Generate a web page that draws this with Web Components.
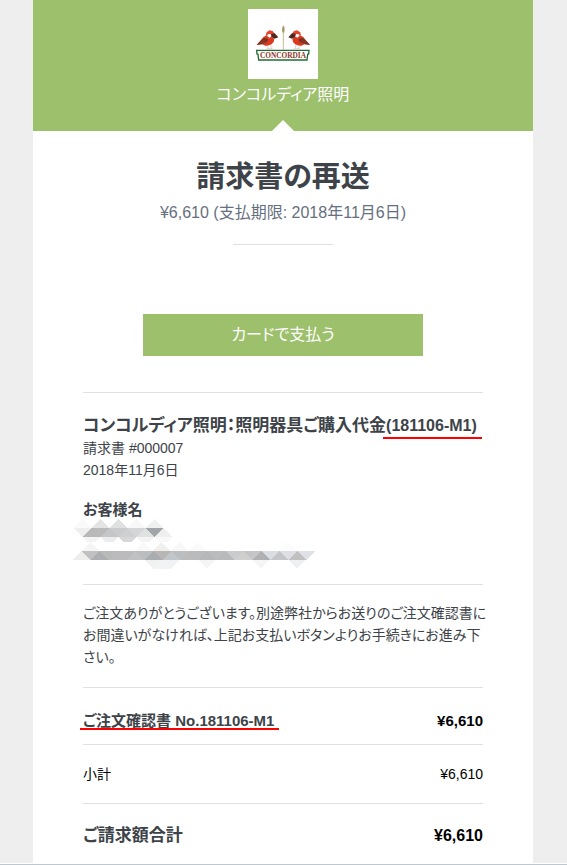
<!DOCTYPE html>
<html lang="ja">
<head>
<meta charset="utf-8">
<meta name="viewport" content="width=device-width, initial-scale=1">
<title>請求書の再送</title>
<style>
    body {
        --brand-color: #9dc06d;
        --rule-color: #dfe0e1;
        --mark-color: #ff0000;
        margin: 0;
        background-color: #eeeeee;
        color: #3d4348;
        font-family: "Liberation Sans", "Noto Sans CJK JP", sans-serif;
        font-size: 14px;
        line-height: 22px;
        /* proportional kana */
        font-feature-settings: "palt";
    }
</style>
</head>
<body>

<invoice-mail>
    <invoice-header slot="header">コンコルディア照明</invoice-header>
    <invoice-summary>
        請求書の再送
        <span slot="due">¥6,610 (支払期限: 2018年11月6日)</span>
    </invoice-summary>
    <pay-button>カードで支払う</pay-button>
    <invoice-details number="請求書 #000007" date="2018年11月6日" customer="お客様名">
        コンコルディア照明：照明器具ご購入代金<marked-text>(181106-M1)</marked-text>
    </invoice-details>
    <invoice-note>ご注文ありがとうございます。別途弊社からお送りのご注文確認書にお間違いがなければ、上記お支払いボタンよりお手続きにお進み下さい。</invoice-note>
    <invoice-row kind="item" amount="¥6,610"><marked-text>ご注文確認書 No.181106-M1</marked-text></invoice-row>
    <invoice-row kind="subtotal" amount="¥6,610">小計</invoice-row>
    <invoice-row kind="total" amount="¥6,610">ご請求額合計</invoice-row>
</invoice-mail>

<script>

function makeTemplate(markup) {
    const template = document.createElement("template");
    template.innerHTML = markup;
    return template;
}

class TemplateElement extends HTMLElement {
    constructor() {
        super();
        this.attachShadow({mode: "open"});
        this.shadowRoot.appendChild(this.constructor.template.content.cloneNode(true));
    }
}


class InvoiceMail extends TemplateElement {
    static template = makeTemplate(`
<style>
    :host {
        display: block;
    }
    .sheet {
        max-width: 500px;
        margin: 0 auto;
        background-color: white;
    }
    .frame {
        padding-right: 1px;
    }
    main {
        padding: 26px 50px 0;
    }
    .edge {
        height: 1px;
        background-color: white;
        border-bottom: 1px solid #bfc8cf;
    }
</style>
<div class="frame">
    <div class="sheet">
        <slot name="header"></slot>
        <main><slot></slot></main>
    </div>
</div>
<div class="edge"></div>
`);
}


class ConcordiaLogo extends TemplateElement {
    static template = makeTemplate(`
<style>
    :host {
        display: block;
        width: 70px;
        height: 70px;
        background-color: white;
    }
    svg {
        display: block;
        width: 100%;
        height: 100%;
    }
    text {
        font-family: "Liberation Serif", serif;
        font-size: 22px;
        font-weight: bold;
        fill: #8c3326;
    }
</style>
<svg viewBox="0 0 210 210" role="img" aria-label="Concordia">
    <defs>
        <g id="bird">
            <path d="M26 108 L36 97 L46 84 L56 79 L72 84 L79 90 L77 99 L69 107 L54 111 L42 106 Z" fill="#dc3a20"/>
            <path d="M26 108 L40 93 L50 86 L60 91 L57 100 L42 105 Z" fill="#74301f"/>
            <path d="M36 102 L52 92 M40 105 L56 97" stroke="#a8472f" stroke-width="2"/>
            <path d="M53 79 L56 70 L64 64 L74 66 L80 74 L78 84 L68 86 Z" fill="#e2442c"/>
            <path d="M57 80 L61 75 L69 76 L71 82 L64 86 Z" fill="#ffffff"/>
            <path d="M69 75 L80 73 L91 85 L80 89 L71 84 Z" fill="#4c2820"/>
            <path d="M57 109 L61 119 M67 106 L71 119 M56 119 H74" fill="none" stroke="#d9bdb5" stroke-width="2"/>
        </g>
    </defs>
    <use href="#bird"/>
    <use href="#bird" transform="translate(212 0) scale(-1 1)"/>
    <path d="M106 68 V122" stroke="#a8a06f" stroke-width="2"/>
    <path d="M106 48 Q112 55 110 67 L107 75 L102 67 Q101 56 106 48 Z" fill="#b9ac7b"/>
    <path d="M104 55 l4 4 M103 62 l5 4" stroke="#7d7246" stroke-width="2"/>
    <path d="M105 79 l3 5 M105 88 l3 5 M105 98 l3 5" stroke="#d2c69b" stroke-width="3"/>
    <path d="M26 124 H183 L182 135 L179 136 L177 153 H32 L30 136 L27 135 Z" fill="#ffffff" stroke="#236b35" stroke-width="4"/>
    <text x="105" y="146" text-anchor="middle">CONCORDIA</text>
</svg>
`);
}


class InvoiceHeader extends TemplateElement {
    static template = makeTemplate(`
<style>
    :host {
        display: flex;
        flex-direction: column;
        align-items: center;
        position: relative;
        padding: 9px 0 20px;
        background-color: var(--brand-color);
        color: white;
        font-size: 16px;
        line-height: 32px;
    }
    /* notch that points up from the sheet */
    .notch {
        position: absolute;
        bottom: 0;
        left: calc(50% - 11px);
        border: solid transparent;
        border-width: 0 11px 11px;
        border-bottom-color: white;
    }
</style>
<concordia-logo></concordia-logo>
<div><slot></slot></div>
<div class="notch"></div>
`);
}


class InvoiceSummary extends TemplateElement {
    static template = makeTemplate(`
<style>
    :host {
        display: block;
        text-align: center;
    }
    h1 {
        margin: 0 0 4px;
        font-size: 29px;
        line-height: 40px;
    }
    p {
        margin: 0;
        color: #666f80;
        font-size: 16px;
        line-height: 24px;
    }
    hr {
        width: 100px;
        margin: 19px auto 0;
        border: 0;
        border-top: 1px solid var(--rule-color);
    }
</style>
<h1><slot></slot></h1>
<p><slot name="due"></slot></p>
<hr>
`);
}


class PayButton extends TemplateElement {
    static template = makeTemplate(`
<style>
    :host {
        display: flex;
        justify-content: center;
        padding: 69px 0 36px;
    }
    button {
        flex: 0 1 280px;
        padding: 9px;
        border: 0;
        background-color: var(--brand-color);
        color: white;
        font: inherit;
        font-feature-settings: inherit;
        font-size: 16px;
        line-height: 24px;
        cursor: pointer;
    }
</style>
<button type="button"><slot></slot></button>
`);
}


class MarkedText extends TemplateElement {
    static template = makeTemplate(`
<style>
    :host {
        display: inline-block;
        position: relative;
    }
    /* hand drawn underline, a little wider than the text */
    :host::after {
        content: "";
        position: absolute;
        left: -3px;
        right: -5px;
        bottom: var(--mark-bottom, 0);
        height: 2px;
        background-color: var(--mark-color);
    }
</style>
<slot></slot>
`);
}


// [direction, centre x, colour] for each row of the mosaic
const mosaicRows = [
    {top: 343, height: 26, cells: [
        ["up", 68, "#fafafa"], ["up", 122, "#e4e4e4"], ["up", 176, "#dee1e0"],
        ["up", 230, "#f7f7f7"], ["up", 284, "#eff1f1"],
    ]},
    {top: 369, height: 27, cells: [
        ["down", 68, "#efefef"], ["up", 95, "#b9b9ba"], ["down", 122, "#bababb"],
        ["up", 149, "#c5c6c7"], ["down", 176, "#cacbcd"], ["up", 203, "#cfd0d2"],
        ["down", 230, "#d5d6d8"], ["up", 257, "#e0e1e1"], ["down", 284, "#a1a5a8"],
        ["up", 311, "#efefef"],
    ]},
    {top: 396, height: 14, cells: [
        ["down", 95, "#f4f4f4"], ["down", 149, "#ededee"], ["down", 203, "#d5d7d9"],
        ["down", 257, "#f3f3f3"], ["down", 311, "#f8f8f8"],
    ]},
    {top: 411, height: 27, cells: [
        ["up", 90, "#f5f5f5"], ["up", 251, "#f9f9f9"], ["up", 305, "#f0f0ef"],
        ["up", 359, "#f8f8f8"], ["up", 412, "#fafafa"], ["up", 683, "#fcfcfc"],
    ]},
    {top: 438, height: 27, cells: [
        ["up", 63, "#ededec"], ["down", 90, "#c1c1c1"], ["up", 117, "#adaeb1"],
        ["down", 144, "#b9b9ba"], ["up", 171, "#bbbbbd"], ["down", 198, "#bbbbbb"],
        ["up", 225, "#c0c1c3"], ["down", 252, "#bbbcbe"], ["up", 279, "#a9acb0"],
        ["down", 306, "#b8b5b3"], ["up", 333, "#c1c6ca"], ["down", 360, "#bcbdbe"],
        ["up", 387, "#bbbbbb"], ["down", 414, "#b9babb"], ["up", 441, "#b6b7b9"],
        ["down", 468, "#bcbcbd"], ["up", 495, "#b8b9ba"], ["down", 522, "#c9cbcd"],
        ["up", 549, "#cfcfce"], ["down", 576, "#c4c5c6"], ["up", 603, "#b0b0b3"],
        ["down", 630, "#dadde2"], ["up", 657, "#c4c5c6"], ["down", 684, "#dddfe4"],
        ["up", 711, "#c0c0c1"], ["down", 738, "#dfe1e6"],
    ]},
    {top: 465, height: 26, cells: [
        ["down", 279, "#f0f1f1"], ["up", 306, "#f2f3f3"], ["down", 333, "#f0f2f4"],
        ["down", 441, "#f5f5f5"], ["down", 603, "#f5f5f5"], ["down", 711, "#eff0f1"],
    ]},
];

class MaskedText extends TemplateElement {
    static template = makeTemplate(`
<style>
    :host {
        display: block;
    }
    svg {
        display: block;
        width: 244px;
        max-width: 100%;
        height: 50px;
    }
</style>
<svg viewBox="36 342 732 150" shape-rendering="crispEdges" aria-hidden="true"></svg>
`);

    constructor() {
        super();
        const svg = this.shadowRoot.querySelector("svg");
        for (const row of mosaicRows) {
            const bottom = row.top + row.height;
            for (const [direction, x, color] of row.cells) {
                // short rows cut the tip off the triangle
                const tip = Math.max(0, 27 - row.height - 1);
                const up = direction === "up";
                const wide = up ? bottom : row.top;
                const narrow = up ? row.top : bottom;
                const cell = document.createElementNS("http://www.w3.org/2000/svg", "polygon");
                cell.setAttribute("points",
                    `${x - 27},${wide} ${x + 27},${wide} ${x + tip},${narrow} ${x - tip},${narrow}`);
                cell.setAttribute("fill", color);
                svg.appendChild(cell);
            }
        }
    }
}


class InvoiceDetails extends TemplateElement {
    static template = makeTemplate(`
<style>
    :host {
        --mark-bottom: -2px;
        display: block;
        padding: 22px 0 15px;
        border-top: 1px solid var(--rule-color);
    }
    h2 {
        margin: 0;
        font-size: 17px;
        line-height: 22px;
    }
    /* order codes are set one size down */
    ::slotted(marked-text) {
        font-size: 16px;
    }
    p {
        margin: 0;
    }
    h3 {
        margin: 18px 0 0;
        font-size: 15px;
        line-height: 22px;
    }
    masked-text {
        margin: -2px 0 0 -11px;
    }
</style>
<h2><slot></slot></h2>
<p class="number"></p>
<p class="date"></p>
<h3></h3>
<masked-text></masked-text>
`);

    connectedCallback() {
        this.shadowRoot.querySelector(".number").textContent = this.getAttribute("number");
        this.shadowRoot.querySelector(".date").textContent = this.getAttribute("date");
        this.shadowRoot.querySelector("h3").textContent = this.getAttribute("customer");
    }
}


class InvoiceNote extends TemplateElement {
    static template = makeTemplate(`
<style>
    :host {
        display: block;
        padding: 17px 0 19px;
        border-top: 1px solid var(--rule-color);
    }
    /* closing punctuation may hang past the rule */
    p {
        margin: 0 -4px 0 0;
    }
</style>
<p><slot></slot></p>
`);
}


class InvoiceRow extends TemplateElement {
    static template = makeTemplate(`
<style>
    :host {
        display: flex;
        justify-content: space-between;
        padding: 18px 0;
        border-top: 1px solid var(--rule-color);
    }
    .amount {
        color: black;
    }
    :host([kind="item"]) {
        --mark-bottom: 2px;
        padding: 22px 0 12px;
        font-size: 15px;
        font-weight: bold;
    }
    :host([kind="subtotal"]) {
        color: black;
    }
    :host([kind="total"]) {
        padding: 21px 0 16px;
        font-size: 17px;
        font-weight: bold;
    }
    :host([kind="total"]) .amount {
        font-size: 16px;
    }
</style>
<span><slot></slot></span>
<span class="amount"></span>
`);

    connectedCallback() {
        this.shadowRoot.querySelector(".amount").textContent = this.getAttribute("amount");
    }
}


customElements.define("concordia-logo", ConcordiaLogo);
customElements.define("marked-text", MarkedText);
customElements.define("masked-text", MaskedText);
customElements.define("invoice-header", InvoiceHeader);
customElements.define("invoice-summary", InvoiceSummary);
customElements.define("pay-button", PayButton);
customElements.define("invoice-details", InvoiceDetails);
customElements.define("invoice-note", InvoiceNote);
customElements.define("invoice-row", InvoiceRow);
customElements.define("invoice-mail", InvoiceMail);

</script>
</body>
</html>
